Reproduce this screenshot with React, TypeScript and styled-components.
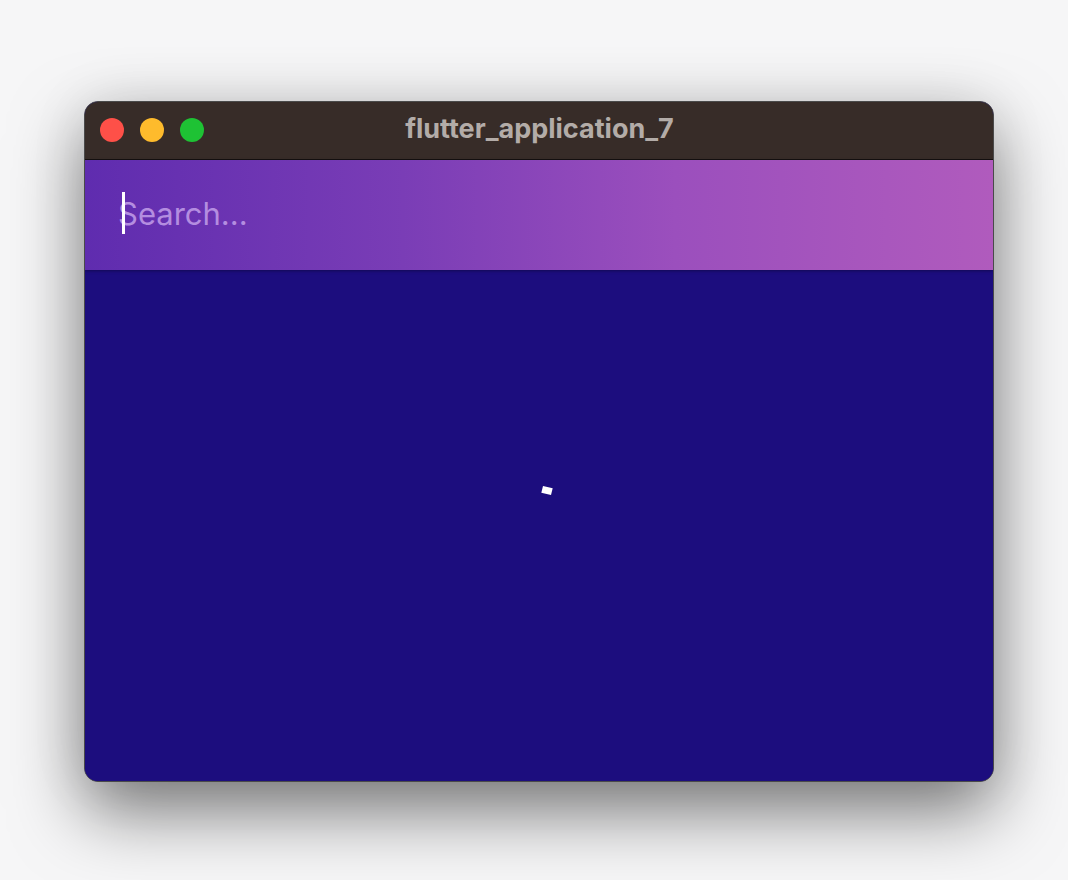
import React from "react";
import styled, { createGlobalStyle } from "styled-components";

const Global = createGlobalStyle`
  html, body { margin: 0; padding: 0; background: #f6f6f7; }
  body { width: 1068px; height: 880px; overflow: hidden; font-family: Inter, "Liberation Sans", sans-serif; }
`;

const Stage = styled.div`
  width: 1068px;
  height: 880px;
  padding: 101px 0 0 84px;
  box-sizing: border-box;
`;

const Window = styled.div`
  width: 910px;
  height: 681px;
  border-radius: 14px;
  overflow: hidden;
  display: flex;
  flex-direction: column;
  background: #1c0d7e;
  border: 1px solid #4a4a4a;
  box-sizing: border-box;
  box-shadow: 0 30px 70px rgba(0, 0, 0, 0.5), 0 0 60px rgba(0, 0, 0, 0.08);
`;

const TitleBar = styled.div`
  height: 57px;
  flex: none;
  position: relative;
  display: flex;
  align-items: center;
  justify-content: center;
  background: #372c28;
  border-bottom: 1px solid #151010;
`;

const Lights = styled.div`
  position: absolute;
  left: 15px;
  top: 16px;
  display: flex;
  gap: 16px;
`;

const Light = styled.span<{ $c: string }>`
  width: 24px;
  height: 24px;
  border-radius: 50%;
  background: ${(p) => p.$c};
`;

const Title = styled.div`
  color: #b3aca8;
  font-family: Inter, "Liberation Sans", sans-serif;
  font-weight: 700;
  font-size: 27px;
  line-height: 1;
  margin: -4px 0 0 1px;
`;

const Header = styled.div`
  height: 110px;
  flex: none;
  display: flex;
  align-items: center;
  padding-left: 33px;
  background: linear-gradient(90deg, #5f2caf 0%, #7a3db6 35%, #9b4fbd 65%, #b05bbd 100%);
  box-shadow: 0 1px 3px rgba(0, 0, 0, 0.35);
  position: relative;
  z-index: 1;
`;

const SearchField = styled.div`
  position: relative;
  display: flex;
  align-items: center;
  height: 42px;
  margin-top: -4px;
`;

const Placeholder = styled.span`
  font-family: Inter, "Liberation Sans", sans-serif;
  font-size: 31px;
  color: #b48de0;
  line-height: 1;
`;

const Caret = styled.span`
  position: absolute;
  left: 4px;
  top: 0;
  width: 3px;
  height: 42px;
  background: #ffffff;
`;

const Body = styled.div`
  flex: 1;
  position: relative;
  background: #1c0d7e;
`;

const Spinner = styled.span`
  position: absolute;
  left: 457px;
  top: 217px;
  width: 10px;
  height: 7px;
  background: #ffffff;
  transform: rotate(14deg);
`;

export default function App() {
  return (
    <>
      <Global />
      <Stage>
        <Window>
          <TitleBar>
            <Lights>
              <Light $c="#fe5048" />
              <Light $c="#febb2c" />
              <Light $c="#1ec234" />
            </Lights>
            <Title>flutter_application_7</Title>
          </TitleBar>
          <Header>
            <SearchField>
              <Placeholder>Search...</Placeholder>
              <Caret />
            </SearchField>
          </Header>
          <Body>
            <Spinner />
          </Body>
        </Window>
      </Stage>
    </>
  );
}
